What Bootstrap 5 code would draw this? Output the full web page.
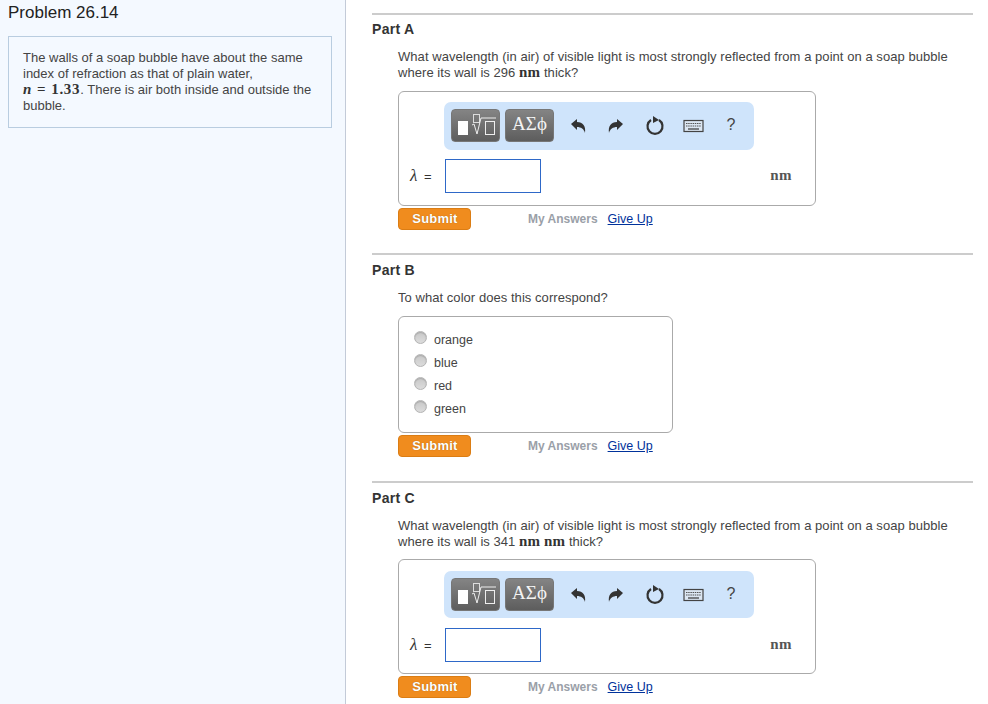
<!DOCTYPE html>
<html lang="en">
<head>
<meta charset="utf-8">
<title>Problem 26.14</title>
<link href="https://cdn.jsdelivr.net/npm/bootstrap@5.3.0/dist/css/bootstrap.min.css" rel="stylesheet">
<style>
html,body{height:704px;overflow:hidden;background:#fff}
body{font-family:"Liberation Sans",Arial,sans-serif;font-size:13px;line-height:16px;color:#444;letter-spacing:.05px}
.side-pane{width:346px;flex:none;background:#f4f9ff;border-right:1px solid #c3cbd8;padding:4px 13px 0 8px}
.prob-title{font-size:17px;line-height:18px;color:#222;margin:0 0 14px;font-weight:400;letter-spacing:0}
.prob-box{border:1px solid #b9cde0;padding:13px 14px 14px;height:92px;letter-spacing:0}
.math-t{font-family:"Liberation Serif",serif;font-size:15px;line-height:1;font-weight:700;color:#333;letter-spacing:.2px}
.math-wide{letter-spacing:.7px;word-spacing:.5px}
.main-pane{width:601px;margin-left:26px;padding-top:13px}
.part-sec{border-top:2px solid #ccc;height:240px}
.part-head{font-size:14px;font-weight:700;color:#333;line-height:16px;margin:6px 0 12px;letter-spacing:.3px}
.head-low{margin:7px 0 12px}
.part-body{margin-left:26px}
.qtext{height:34px;margin-bottom:0}
.head-low + .part-body .qtext{height:33px}
.qtext-b{height:26px;margin-bottom:0}
.ans-box{border:1px solid #aaa;border-radius:6px;background:#fff}
.ans-a{width:418px;height:115px;padding:10px 0 0 45px}
.ans-c{padding-top:11px}
.ans-b{width:275px;height:117px;padding:10px 0 0 15px}
.tool-bar{width:310px;height:48px;background:#cfe4fb;border-radius:7px;padding:7px;align-items:flex-start}
.ans-c .tool-bar{height:47px}
.tool-btn{height:33px;border-radius:4px;background:linear-gradient(#848484,#5d5d5d);border:1px solid #777;color:#f4f4f4;margin-right:5px;padding:0;display:flex;align-items:center;justify-content:center;font-family:"Liberation Serif",serif;font-size:19px;letter-spacing:0;width:49px}
.greek-btn{padding-bottom:4px;font-weight:400}
.tool-ico{height:33px;display:flex;align-items:center;justify-content:center;color:#333;margin-left:14px}
.ico-first{margin-left:7px}
.ico-wide{margin-left:15px}
.ico-key{margin-left:16px}
.qmark{font-size:16px;color:#444;width:24px;margin-left:14px;text-align:center;line-height:31px;height:33px}
.ans-row{margin:9px 0 0 -34px;height:34px;width:382px}
.ans-c .ans-row{margin-top:10px}
.lam-lab{width:35px;font-size:13px;color:#333;white-space:nowrap}
.lam-sym{font-family:"Liberation Serif",serif;font-size:17px;font-style:italic;margin-right:3px}
.val-input{width:96px;height:34px;border:1px solid #2e68c8;background:#fff}
.unit-t{font-family:"Liberation Serif",serif;font-size:15px;font-weight:700;color:#555;margin-left:auto;letter-spacing:.4px;padding-bottom:2px}
.act-row{margin-top:2px;height:22px;font-size:12px;letter-spacing:0}
.sub-btn{width:73px;height:22px;background:#f08c1e;border:1px solid #db7d14;border-radius:4px;color:#fff;font-weight:700;font-size:13px;line-height:18px;padding:0 0 0 1px;letter-spacing:.2px;text-shadow:0 0 1px #9a5a10}
.my-ans{color:#9aa0a8;font-weight:700;margin-left:57px}
.give-up{color:#00329b;font-weight:400;font-size:12.5px;margin-left:10px;text-decoration:underline}
.opt-row{height:23px;align-items:center;gap:7px;font-size:12.5px;letter-spacing:0}
.opt-dot{width:13px;height:13px;border-radius:50%;background:linear-gradient(#c8c8c8,#dcdcdc);border:1px solid #b4b4b4;box-shadow:inset 0 1px 1px #aaa;margin-top:-2px}
.opt-row span{position:relative;top:1px}
</style>
</head>
<body>
<div class="d-flex h-100">
  <aside class="side-pane">
    <h1 class="prob-title">Problem 26.14</h1>
    <div class="prob-box">The walls of a soap bubble have about the same index of refraction as that of plain water,<br><span class="math-t math-wide"><i>n</i> = 1.33</span>. There is air both inside and outside the bubble.</div>
  </aside>
  <main class="main-pane">

    <section class="part-sec">
      <div class="part-head">Part A</div>
      <div class="part-body">
        <p class="qtext">What wavelength (in air) of visible light is most strongly reflected from a point on a soap bubble where its wall is 296 <span class="math-t">nm</span> thick?</p>
        <div class="ans-box ans-a mt-2">
          <div class="tool-bar d-flex">
            <div class="tool-btn"><svg width="47" height="31" viewBox="0 0 47 31"><rect x="6" y="11" width="10" height="14" fill="#fff"/><rect x="21.500" y="4.500" width="6" height="8" fill="none" stroke="#ddd"/><path d="M20 15l2-1 3 10 4-16h15" fill="none" stroke="#eee"/><rect x="33.500" y="11.500" width="9" height="13" fill="none" stroke="#eee"/></svg></div>
            <div class="tool-btn greek-btn">ΑΣϕ</div>
            <div class="tool-ico ico-first"><svg width="24" height="24" viewBox="0 0 24 24"><path d="M5 10l6-5v3c6 0 9 4 8 11-1-4-4-6-8-6v3z" fill="#333"/></svg></div>
            <div class="tool-ico"><svg width="24" height="24" viewBox="0 0 24 24"><path d="M19 10l-6-5v3c-6 0-9 4-8 11 1-4 4-6 8-6v3z" fill="#333"/></svg></div>
            <div class="tool-ico ico-wide"><svg width="24" height="24" viewBox="0 0 24 24"><path d="M8 6a7.500 7.500 0 1 0 8 0" fill="none" stroke="#333" stroke-width="2.200"/><path d="M10 2l6 4-6 3z" fill="#333"/></svg></div>
            <div class="tool-ico ico-key"><svg width="22" height="14" viewBox="0 0 22 14"><rect x="1" y="1.500" width="19" height="11" fill="#dbe6f2" stroke="#444" stroke-width="1.200"/><path d="M3 4.500h15M3 7h15" stroke="#555" stroke-dasharray="1.500 .7"/><path d="M5 10h11" stroke="#444" stroke-width="1.300"/></svg></div>
            <div class="qmark">?</div>
          </div>
          <div class="ans-row d-flex align-items-center">
            <div class="lam-lab"><span class="lam-sym">λ</span> =</div>
            <div class="val-input"></div>
            <div class="unit-t">nm</div>
          </div>
        </div>
        <div class="act-row d-flex align-items-center">
          <button class="sub-btn">Submit</button>
          <span class="my-ans">My Answers</span><a class="give-up" href="#">Give Up</a>
        </div>
      </div>
    </section>

    <section class="part-sec" style="height:228px">
      <div class="part-head head-low">Part B</div>
      <div class="part-body">
        <p class="qtext-b">To what color does this correspond?</p>
        <div class="ans-box ans-b">
          <div class="opt-row d-flex"><i class="opt-dot"></i><span>orange</span></div>
          <div class="opt-row d-flex"><i class="opt-dot"></i><span>blue</span></div>
          <div class="opt-row d-flex"><i class="opt-dot"></i><span>red</span></div>
          <div class="opt-row d-flex"><i class="opt-dot"></i><span>green</span></div>
        </div>
        <div class="act-row d-flex align-items-center">
          <button class="sub-btn">Submit</button>
          <span class="my-ans">My Answers</span><a class="give-up" href="#">Give Up</a>
        </div>
      </div>
    </section>

    <section class="part-sec">
      <div class="part-head head-low">Part C</div>
      <div class="part-body">
        <p class="qtext">What wavelength (in air) of visible light is most strongly reflected from a point on a soap bubble where its wall is 341 <span class="math-t">nm</span> <span class="math-t">nm</span> thick?</p>
        <div class="ans-box ans-a ans-c mt-2">
          <div class="tool-bar d-flex">
            <div class="tool-btn"><svg width="47" height="31" viewBox="0 0 47 31"><rect x="6" y="11" width="10" height="14" fill="#fff"/><rect x="21.500" y="4.500" width="6" height="8" fill="none" stroke="#ddd"/><path d="M20 15l2-1 3 10 4-16h15" fill="none" stroke="#eee"/><rect x="33.500" y="11.500" width="9" height="13" fill="none" stroke="#eee"/></svg></div>
            <div class="tool-btn greek-btn">ΑΣϕ</div>
            <div class="tool-ico ico-first"><svg width="24" height="24" viewBox="0 0 24 24"><path d="M5 10l6-5v3c6 0 9 4 8 11-1-4-4-6-8-6v3z" fill="#333"/></svg></div>
            <div class="tool-ico"><svg width="24" height="24" viewBox="0 0 24 24"><path d="M19 10l-6-5v3c-6 0-9 4-8 11 1-4 4-6 8-6v3z" fill="#333"/></svg></div>
            <div class="tool-ico ico-wide"><svg width="24" height="24" viewBox="0 0 24 24"><path d="M8 6a7.500 7.500 0 1 0 8 0" fill="none" stroke="#333" stroke-width="2.200"/><path d="M10 2l6 4-6 3z" fill="#333"/></svg></div>
            <div class="tool-ico ico-key"><svg width="22" height="14" viewBox="0 0 22 14"><rect x="1" y="1.500" width="19" height="11" fill="#dbe6f2" stroke="#444" stroke-width="1.200"/><path d="M3 4.500h15M3 7h15" stroke="#555" stroke-dasharray="1.500 .7"/><path d="M5 10h11" stroke="#444" stroke-width="1.300"/></svg></div>
            <div class="qmark">?</div>
          </div>
          <div class="ans-row d-flex align-items-center">
            <div class="lam-lab"><span class="lam-sym">λ</span> =</div>
            <div class="val-input"></div>
            <div class="unit-t">nm</div>
          </div>
        </div>
        <div class="act-row d-flex align-items-center">
          <button class="sub-btn">Submit</button>
          <span class="my-ans">My Answers</span><a class="give-up" href="#">Give Up</a>
        </div>
      </div>
    </section>
  </main>
</div>
<script src="https://cdn.jsdelivr.net/npm/bootstrap@5.3.0/dist/js/bootstrap.bundle.min.js"></script>
</body>
</html>
